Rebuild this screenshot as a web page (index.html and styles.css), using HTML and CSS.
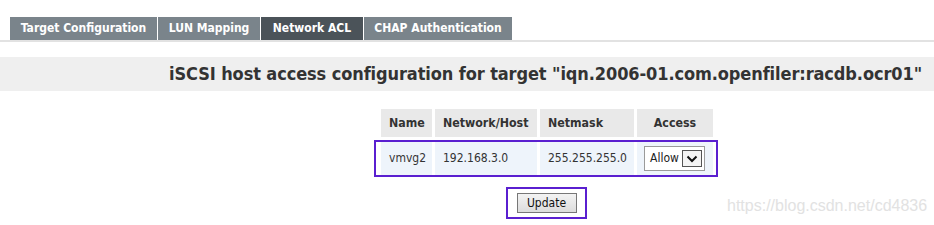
FILE: index.html
```html
<!DOCTYPE html>
<html>
<head>
<meta charset="utf-8">
<link rel="stylesheet" href="styles.css">
</head>
<body>
<div class="tabs">
  <div class="tab t1">Target Configuration</div>
  <div class="tab t2">LUN Mapping</div>
  <div class="tab t3 active">Network ACL</div>
  <div class="tab t4">CHAP Authentication</div>
</div>
<div class="title">iSCSI host access configuration for target "iqn.2006-01.com.openfiler:racdb.ocr01"</div>
<div class="acl">
  <div class="row head">
    <div class="c c1">Name</div>
    <div class="c c2">Network/Host</div>
    <div class="c c3">Netmask</div>
    <div class="c c4">Access</div>
  </div>
  <div class="datawrap">
    <div class="row data">
      <div class="c c1">vmvg2</div>
      <div class="c c2">192.168.3.0</div>
      <div class="c c3">255.255.255.0</div>
      <div class="c c4">
        <div class="select"><span>Allow</span><span class="arrow"><svg width="12" height="8" viewBox="0 0 12 8"><path d="M1.5 1.5 L6 6 L10.5 1.5" fill="none" stroke="#111" stroke-width="2"/></svg></span></div>
      </div>
    </div>
  </div>
  <div class="btnwrap"><div class="btn">Update</div></div>
</div>
<div class="wm">https://blog.csdn.net/cd4836</div>
</body>
</html>
```
FILE: styles.css
```css
html, body { margin: 0; padding: 0; background: #fff; }
body { width: 934px; height: 225px; position: relative; overflow: hidden; font-family: "DejaVu Sans", sans-serif; }
.tabs { display: flex; padding: 17px 0 0 10px; border-bottom: 2px solid #e2e2e2; height: 23px; }
.tab { height: 23px; line-height: 23px; color: #fff; background: #7a848b; font-weight: bold; font-size: 12px; font-stretch: condensed; font-family: "DejaVu Sans Condensed", "DejaVu Sans", sans-serif; text-align: center; margin-right: 1px; }
.t1 { width: 147px; }
.t2 { width: 102px; }
.t3 { width: 102px; }
.t4 { width: 148px; }
.tab.active { background: #4b5359; }
.title { margin-top: 15px; height: 34px; line-height: 34px; background: #efefef; text-align: right; padding-right: 12px; font-family: "DejaVu Sans Condensed", "DejaVu Sans", sans-serif; font-stretch: condensed; font-weight: bold; font-size: 18px; letter-spacing: -0.1px; color: #333; }
.acl { margin: 18px 0 0 381px; width: 332px; font-family: "DejaVu Sans Condensed", "DejaVu Sans", sans-serif; font-stretch: condensed; font-size: 12px; color: #333; }
.row { display: flex; gap: 3px; }
.head .c { height: 28px; line-height: 28px; background: #e9e9e9; font-weight: bold; font-size: 12.3px; padding-left: 8px; box-sizing: border-box; }
.c1 { width: 51px; }
.c2 { width: 102px; }
.c3 { width: 94px; }
.c4 { width: 76px; }
.head .c4 { text-align: center; padding-left: 0; }
.datawrap { margin: 3px -5px 0 -7px; border: 2px solid #5a1fd0; background: #fff; }
.data { padding-left: 5px; }
.data .c { height: 33px; line-height: 33px; background: #eef4fb; padding-left: 8px; box-sizing: border-box; }
.data .c4 { padding-left: 7px; display: flex; align-items: center; }
.select { width: 61px; height: 25px; box-sizing: border-box; border: 1px solid #9a9a9a; background: #fff; display: flex; align-items: center; padding-left: 5px; font-size: 12px; color: #222; }
.select span:first-child { width: 32px; }
.arrow { width: 20px; height: 17px; box-sizing: border-box; border: 1px solid #555; display: flex; align-items: center; justify-content: center; background: #f4f4f4; }
.btnwrap { margin: 10px 0 0 125px; width: 77px; height: 28px; border: 2px solid #5a1fd0; display: flex; align-items: center; justify-content: center; }
.btn { width: 60px; height: 20px; box-sizing: border-box; border: 1px solid #777; background: linear-gradient(#f3f3f3, #dcdcdc); text-align: center; line-height: 18px; font-size: 12px; color: #111; }
.wm { position: absolute; left: 727px; top: 197px; font-family: "Liberation Sans", sans-serif; font-size: 16px; color: #e2e2e2; }
```
